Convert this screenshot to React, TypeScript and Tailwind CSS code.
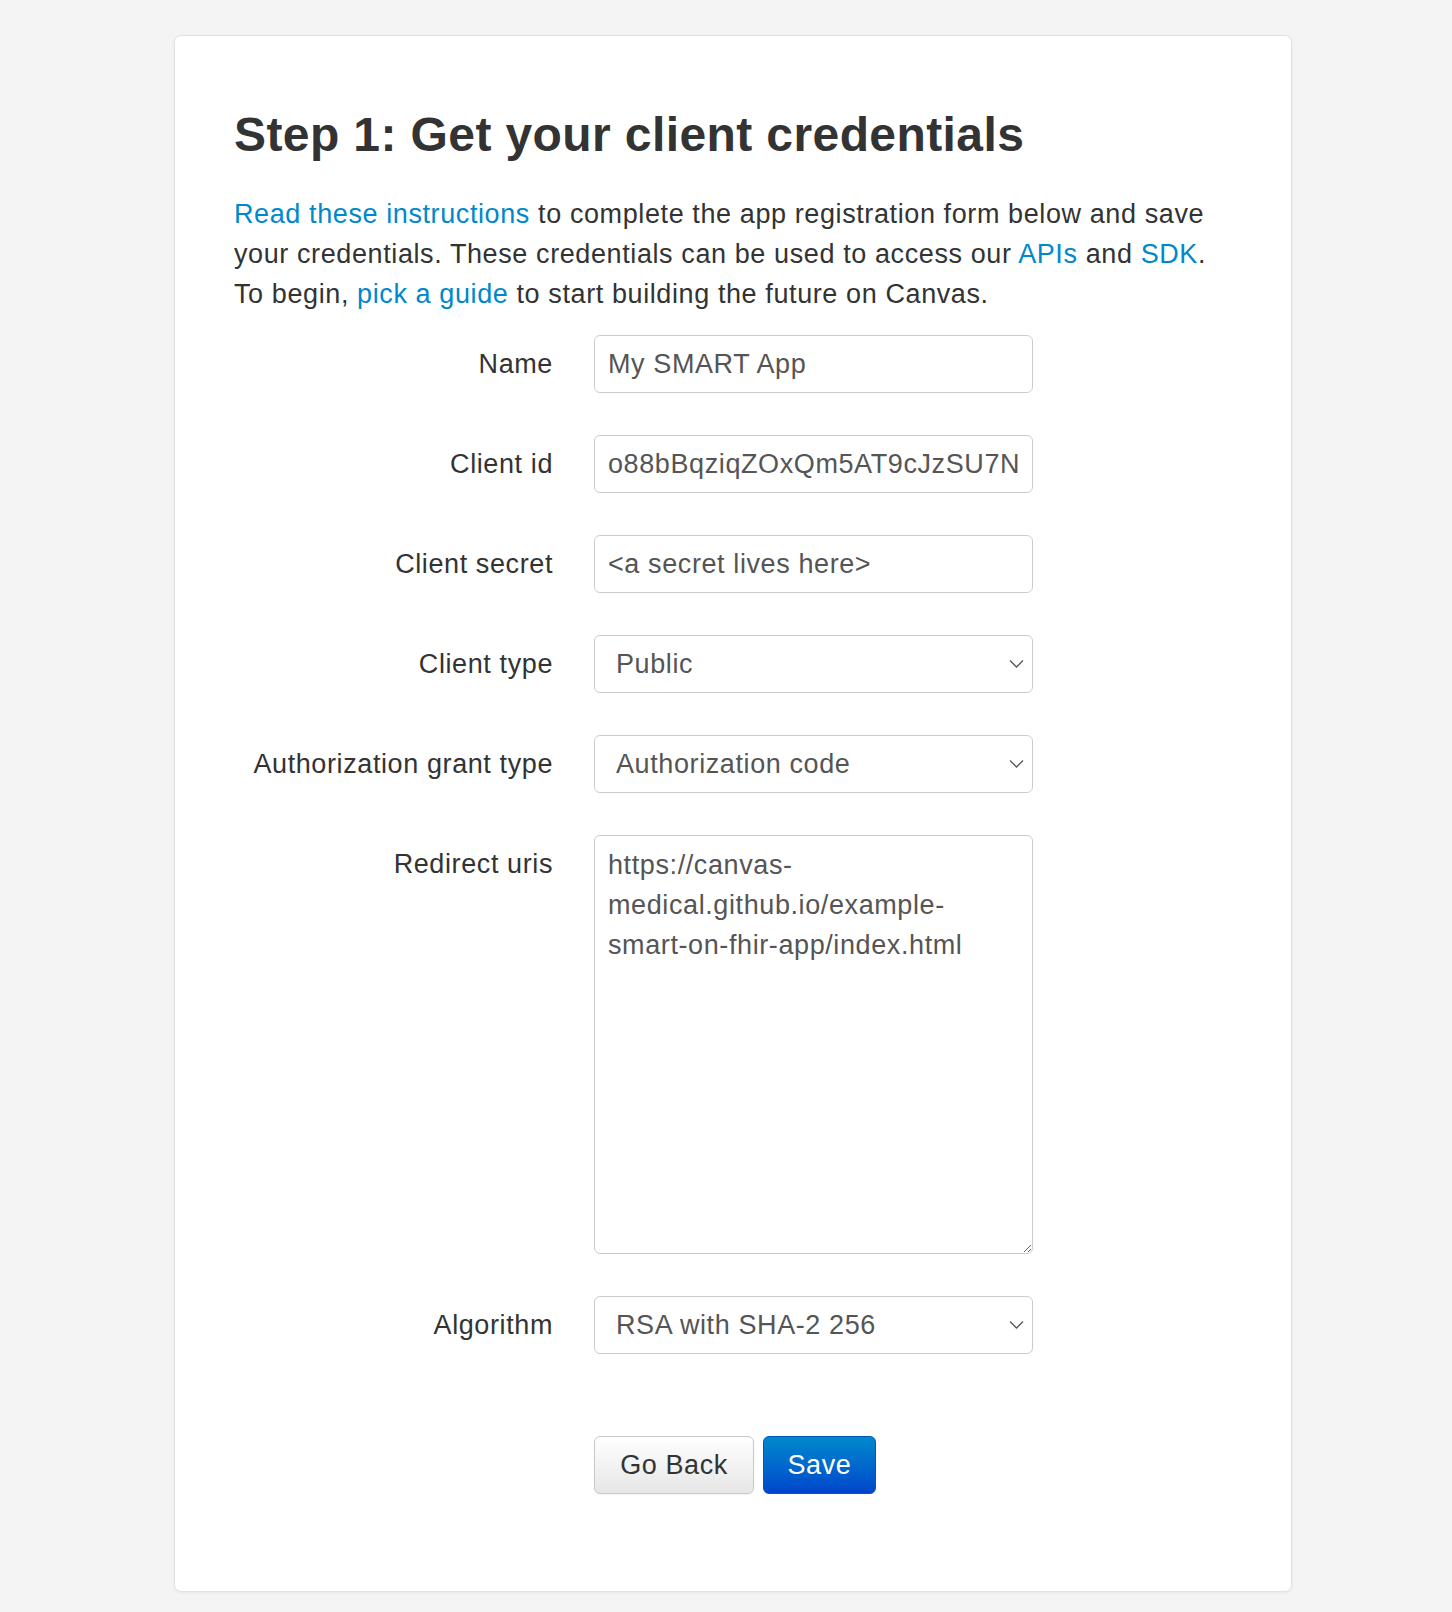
import React from "react";

const font = { fontFamily: '"Liberation Sans", Arial, Helvetica, sans-serif', letterSpacing: "0.6px" };

function Chevron() {
  return (
    <svg width="15" height="9" viewBox="0 0 15 9" className="absolute right-[8px] top-1/2 -translate-y-1/2 pointer-events-none">
      <path d="M1 1 L7.5 7.5 L14 1" fill="none" stroke="#555" strokeWidth="1.3" />
    </svg>
  );
}

function Row({ label, children, top }: { label: string; children: React.ReactNode; top?: boolean }) {
  return (
    <div className={`flex ${top ? "items-start" : "items-center"} mb-[42px]`}>
      <label className={`w-[360px] shrink-0 pr-[41px] text-right text-[27px] leading-[40px] text-[#333] ${top ? "pt-[9px]" : ""}`}>{label}</label>
      {children}
    </div>
  );
}

const inputCls =
  "w-[439px] h-[58px] rounded-[6px] border border-[#cccccc] bg-white px-[13px] text-[27px] text-[#555] outline-none";

function Select({ value }: { value: string }) {
  return (
    <div className="relative w-[439px] h-[58px] rounded-[6px] border border-[#cccccc] bg-white flex items-center pl-[21px] text-[27px] text-[#555]">
      <span>{value}</span>
      <Chevron />
    </div>
  );
}

export default function App() {
  return (
    <div className="min-h-[1612px] bg-[#f4f4f4] pt-[35px] pb-[20px]" style={font}>
      <div className="ml-[174px] w-[1118px] h-[1557px] rounded-[7px] border border-[#e2e2e2] bg-white shadow-[0_1px_3px_rgba(0,0,0,0.06)] px-[59px] pt-[72px]">
        <h1 className="text-[48px] leading-[53px] font-bold text-[#333]" style={{ letterSpacing: "0.4px" }}>
          Step 1: Get your client credentials
        </h1>
        <p className="mt-[33px] text-[27px] leading-[40px] text-[#333] pr-[20px]">
          <a className="text-[#0088cc]" href="#">Read these instructions</a> to complete the app registration form below and save your credentials. These credentials can be used to access our{" "}
          <a className="text-[#0088cc]" href="#">APIs</a> and <a className="text-[#0088cc]" href="#">SDK</a>. To begin,{" "}
          <a className="text-[#0088cc]" href="#">pick a guide</a> to start building the future on Canvas.
        </p>
        <form className="mt-[21px]" onSubmit={(e) => e.preventDefault()}>
          <Row label="Name">
            <input className={inputCls} style={font} defaultValue="My SMART App" />
          </Row>
          <Row label="Client id">
            <input className={inputCls} style={font} defaultValue="o88bBqziqZOxQm5AT9cJzSU7NnHMVvvczPMuDUSm" />
          </Row>
          <Row label="Client secret">
            <input className={inputCls} style={font} defaultValue="<a secret lives here>" />
          </Row>
          <Row label="Client type">
            <Select value="Public" />
          </Row>
          <Row label="Authorization grant type">
            <Select value="Authorization code" />
          </Row>
          <Row label="Redirect uris" top>
            <textarea
              className="w-[439px] h-[419px] rounded-[6px] border border-[#cccccc] bg-white px-[13px] py-[9px] text-[27px] leading-[40px] text-[#555] outline-none"
              style={font}
              defaultValue="https://canvas-medical.github.io/example-smart-on-fhir-app/index.html"
            />
          </Row>
          <Row label="Algorithm">
            <Select value="RSA with SHA-2 256" />
          </Row>
          <div className="flex gap-[9px] pl-[360px] mt-[82px]">
            <button
              type="button"
              className="w-[160px] h-[58px] rounded-[6px] border border-[#c8c8c8] bg-gradient-to-b from-white to-[#e6e6e6] text-[27px] text-[#333] shadow-[0_1px_2px_rgba(0,0,0,0.05)]"
              style={font}
            >
              Go Back
            </button>
            <button
              type="button"
              className="w-[113px] h-[58px] rounded-[6px] border border-[#0055bb] bg-gradient-to-b from-[#0088cc] to-[#0044cc] text-[27px] text-white"
              style={font}
            >
              Save
            </button>
          </div>
        </form>
      </div>
    </div>
  );
}
